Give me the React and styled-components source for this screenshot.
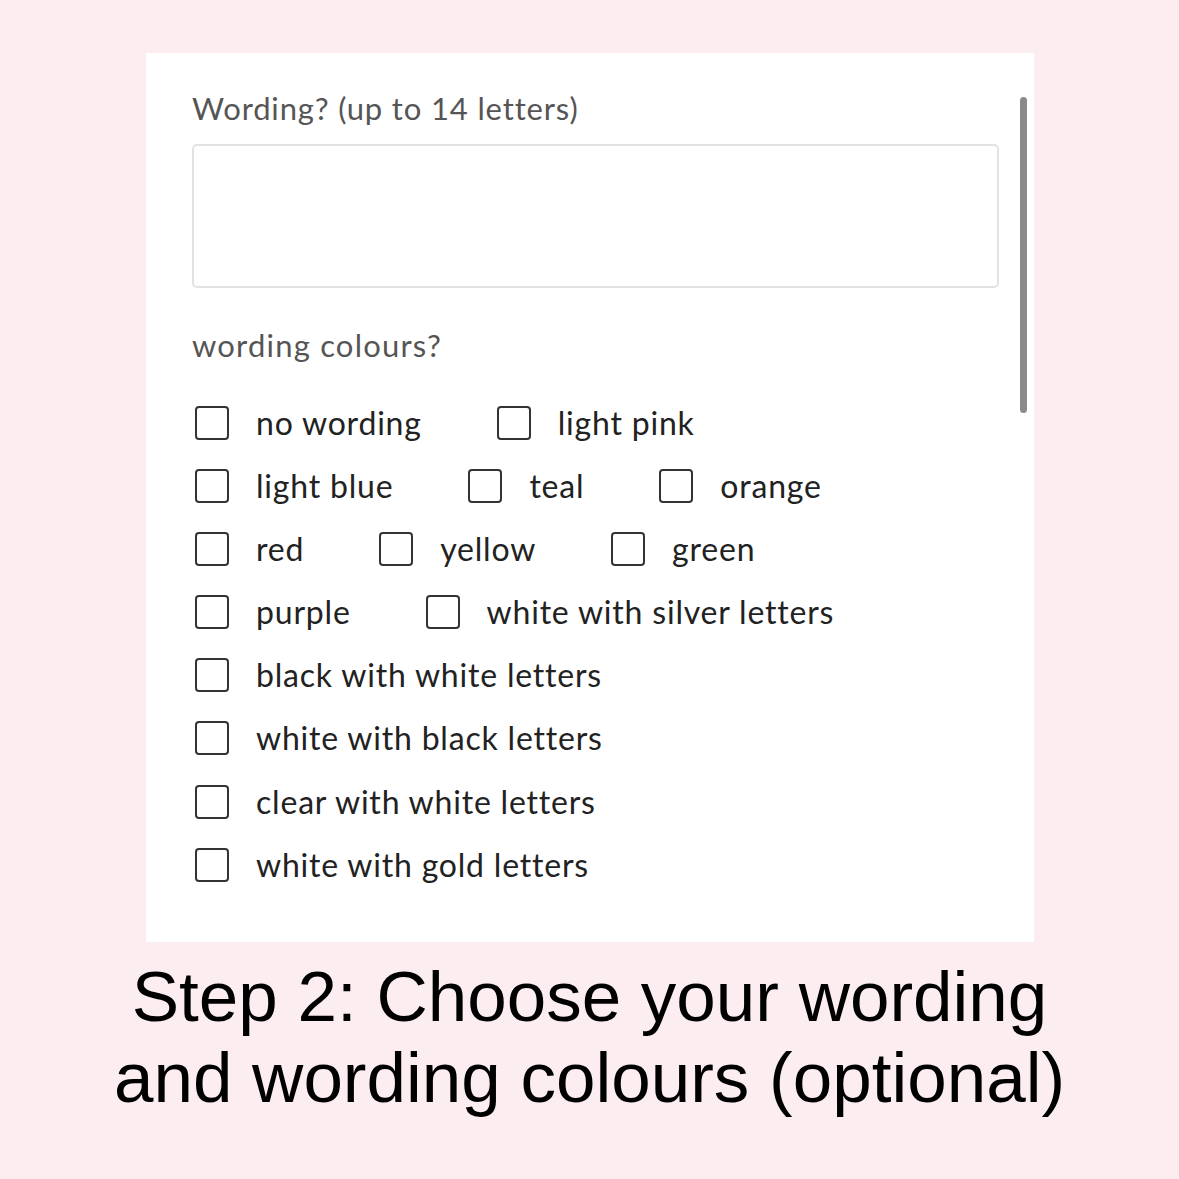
import React from "react"
import styled, { createGlobalStyle } from "styled-components"

const GlobalStyle = createGlobalStyle`
  html, body {
    margin: 0;
    padding: 0;
    background: #fcedf0;
  }
`

const Page = styled.div`
  width: 1179px;
  height: 1179px;
  background: #fcedf0;
  display: flex;
  flex-direction: column;
  align-items: flex-start;
  padding-top: 53px;
  box-sizing: border-box;
`

const Card = styled.div`
  position: relative;
  margin-left: 146px;
  width: 888px;
  height: 889px;
  background: #ffffff;
  padding: 36px 35px 0 46px;
  box-sizing: border-box;
  display: flex;
  flex-direction: column;
`

const Scrollbar = styled.div`
  position: absolute;
  top: 44px;
  right: 7px;
  width: 7px;
  height: 316px;
  border-radius: 4px;
  background: #8a8a8a;
`

const FieldLabel = styled.div`
  font-family: Lato, "Noto Sans", sans-serif;
  font-size: 31px;
  letter-spacing: 0.85px;
  line-height: 38px;
  color: #555555;
`

const TextBox = styled.div`
  margin-top: 17px;
  height: 144px;
  border: 2px solid #e2e2e2;
  border-radius: 5px;
  box-sizing: border-box;
`

const SectionLabel = styled(FieldLabel)`
  margin-top: 38px;
  letter-spacing: 1.2px;
`

const Options = styled.div`
  margin-top: 42px;
  display: flex;
  flex-direction: column;
  gap: 29.1px;
`

const Row = styled.div`
  display: flex;
  align-items: center;
  gap: 72px;
`

const Option = styled.label`
  display: flex;
  align-items: center;
  gap: 27px;
  font-family: Lato, "Noto Sans", sans-serif;
  font-size: 32px;
  letter-spacing: 0.8px;
  line-height: 34px;
  color: #222222;
`

const Box = styled.span`
  width: 34px;
  height: 34px;
  margin-left: 3px;
  border: 2.5px solid #333333;
  border-radius: 4px;
  box-sizing: border-box;
  flex-shrink: 0;
`

const Caption = styled.div`
  width: 100%;
  margin-top: 14px;
  font-family: "Liberation Sans", Arial, sans-serif;
  font-size: 71px;
  line-height: 81px;
  color: #000000;
  text-align: center;
`

const rows = [
  ["no wording", "light pink"],
  ["light blue", "teal", "orange"],
  ["red", "yellow", "green"],
  ["purple", "white with silver letters"],
  ["black with white letters"],
  ["white with black letters"],
  ["clear with white letters"],
  ["white with gold letters"],
]

const App = () => (
  <>
    <GlobalStyle />
    <Page>
      <Card>
        <Scrollbar />
        <FieldLabel>Wording? (up to 14 letters)</FieldLabel>
        <TextBox />
        <SectionLabel>wording colours?</SectionLabel>
        <Options>
          {rows.map((row, i) => (
            <Row key={i}>
              {row.map(name => (
                <Option key={name}>
                  <Box />
                  {name}
                </Option>
              ))}
            </Row>
          ))}
        </Options>
      </Card>
      <Caption>
        Step 2: Choose your wording
        <br />
        and wording colours (optional)
      </Caption>
    </Page>
  </>
)

export default App
